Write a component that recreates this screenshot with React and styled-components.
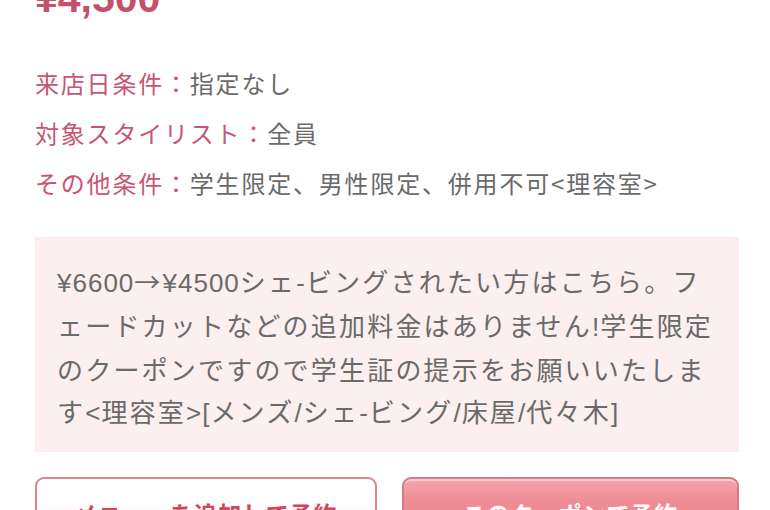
import React from "react";
import styled, { createGlobalStyle } from "styled-components";

const GlobalStyle = createGlobalStyle`
  html, body {
    margin: 0;
    padding: 0;
    background: #ffffff;
    overflow: hidden;
  }
  body {
    font-family: "Noto Sans CJK JP", "Noto Sans", sans-serif;
    color: #666666;
  }
`;

const Page = styled.div`
  width: 770px;
  height: 510px;
  box-sizing: border-box;
  padding: 0 31px 0 35px;
  overflow: hidden;
`;

const Price = styled.div`
  margin-top: -22px;
  height: 40px;
  font-family: "Liberation Sans", Arial, sans-serif;
  font-weight: bold;
  font-size: 41px;
  line-height: 40px;
  color: #c4516b;
`;

const Conditions = styled.dl`
  margin: 40px 0 0;
  padding: 0;
`;

const Row = styled.div`
  display: flex;
  height: 50px;
  align-items: center;
  font-size: 24px;
  letter-spacing: 1.8px;
  line-height: 50px;
`;

const Label = styled.dt`
  margin: 0;
  color: #c65673;
`;

const Value = styled.dd`
  margin: 0;
  color: #6a6a6a;
`;

const Note = styled.div`
  margin-top: 29px;
  height: 215px;
  box-sizing: border-box;
  padding: 23px 20px 0 22px;
  background: #fbeff0;
  font-size: 26px;
  letter-spacing: 2.2px;
  line-height: 42px;
  color: #6a6a6a;
  white-space: nowrap;
`;

// half-width runs (digits, brackets, slashes) sit tighter than kana
const Latin = styled.span`
  font-family: "Liberation Sans", Arial, sans-serif;
  letter-spacing: 1px;
`;

const Buttons = styled.div`
  display: grid;
  grid-template-columns: 342px 337px;
  column-gap: 25px;
  margin-top: 25px;
`;

const Button = styled.button`
  height: 72px;
  box-sizing: border-box;
  border-radius: 9px;
  font-family: "Noto Sans CJK JP", "Noto Sans", sans-serif;
  font-size: 23px;
  font-weight: bold;
  letter-spacing: 1px;
  cursor: pointer;
  border: 2px solid ${(p) => (p.$primary ? "#cf7d88" : "#dc8590")};
  color: ${(p) => (p.$primary ? "#ffffff" : "#d2465c")};
  background: ${(p) =>
    p.$primary
      ? "linear-gradient(#f5a4ab 0%, #ef8e96 30%, #eb7e87 100%)"
      : "linear-gradient(#ffffff 0%, #ffffff 30%, #fbe6e8 100%)"};
  box-shadow: ${(p) =>
    p.$primary ? "inset 0 2px 0 rgba(255,255,255,0.45)" : "none"};
`;

const conditions = [
  ["来店日条件：", "指定なし"],
  ["対象スタイリスト：", "全員"],
  ["その他条件：", "学生限定、男性限定、併用不可<理容室>"],
];

const noteLines = [
  "¥6600→¥4500シェ-ビングされたい方はこちら。フ",
  "ェードカットなどの追加料金はありません!学生限定",
  "のクーポンですので学生証の提示をお願いいたしま",
  "す<理容室>[メンズ/シェ-ビング/床屋/代々木]",
];

const splitLatin = (line) =>
  line
    .split(/([\x20-\x7E¥]+)/)
    .filter(Boolean)
    .map((part, i) =>
      /^[\x20-\x7E¥]+$/.test(part) ? <Latin key={i}>{part}</Latin> : part
    );

export default function App() {
  return (
    <Page>
      <GlobalStyle />
      <Price>¥4,500</Price>
      <Conditions>
        {conditions.map(([label, value]) => (
          <Row key={label}>
            <Label>{label}</Label>
            <Value>{value}</Value>
          </Row>
        ))}
      </Conditions>
      <Note>
        {noteLines.map((line, i) => (
          <div key={i}>{splitLatin(line)}</div>
        ))}
      </Note>
      <Buttons>
        <Button>メニューを追加して予約</Button>
        <Button $primary>このクーポンで予約</Button>
      </Buttons>
    </Page>
  );
}
